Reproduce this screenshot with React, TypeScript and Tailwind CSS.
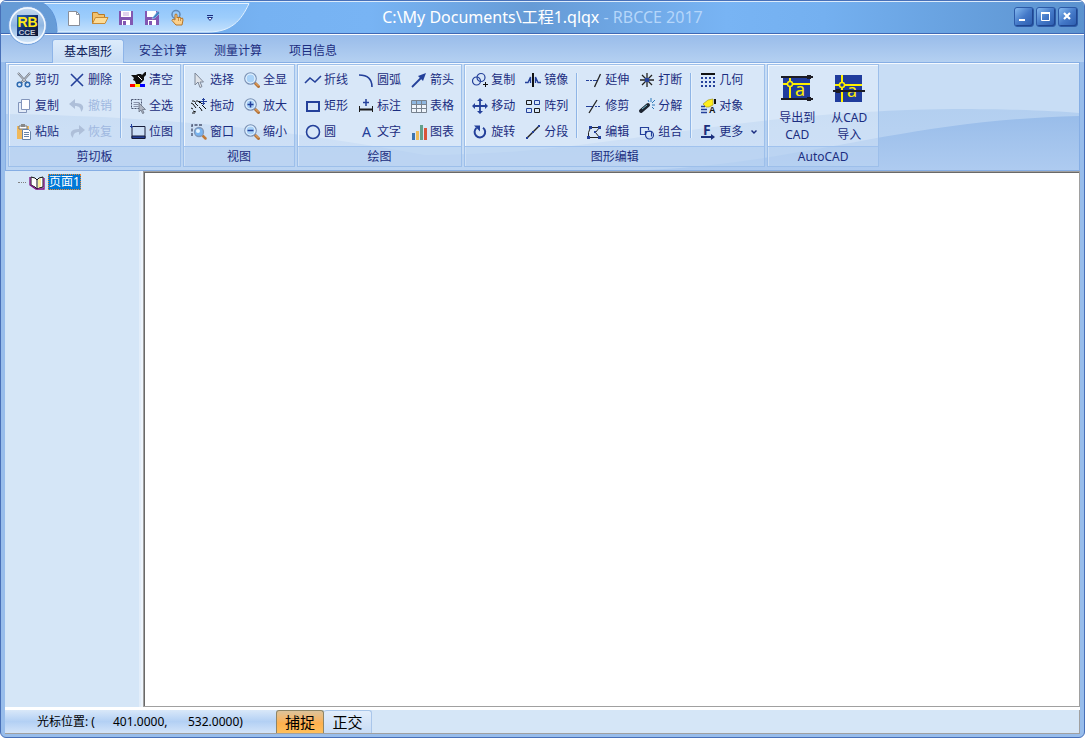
import type { ReactNode } from "react";

interface Tool {
  label: string;
  icon: ReactNode;
  disabled?: boolean;
}

const NAVY = "#24409a";

function Icon({ children }: { children: ReactNode }) {
  return (
    <svg viewBox="0 0 16 16" className="size-4 shrink-0 overflow-visible" fill="none" aria-hidden="true">
      {children}
    </svg>
  );
}

function Magnifier({ children }: { children?: ReactNode }) {
  return (
    <Icon>
      <path d="M11.500 11.500l3 3" stroke="#b5743a" strokeWidth="3" strokeLinecap="round" />
      <path d="M11.500 11l3 3" stroke="#f2b36c" strokeWidth="1" />
      <circle cx="6.500" cy="6.500" r="5.700" fill="#a9d2f8" stroke="#7d93b5" strokeWidth="1.300" />
      <circle cx="6.500" cy="6.500" r="4.500" stroke="#e8f4ff" strokeWidth="1.200" />
      {children}
    </Icon>
  );
}

const clipboardTools: Tool[][] = [
  [
    {
      label: "剪切",
      icon: (
        <Icon>
          <path d="M2 1l9 10M14 1L5 11" stroke="#6c7480" strokeWidth="2" />
          <path d="M2 1l8 9M14 1L6 10" stroke="#e4e9ef" strokeWidth="0.8" />
          <circle cx="3.500" cy="12.500" r="2.300" stroke="#2d6ab0" strokeWidth="1.500" />
          <circle cx="11.500" cy="12.500" r="2.300" stroke="#2d6ab0" strokeWidth="1.500" />
        </Icon>
      ),
    },
    {
      label: "复制",
      icon: (
        <Icon>
          <path d="M2.500 4.500h8v10h-8z" fill="#e4ecf8" stroke="#8295bb" />
          <path d="M5.500 1.500h8v10h-8z" fill="#fff" stroke="#8295bb" />
        </Icon>
      ),
    },
    {
      label: "粘贴",
      icon: (
        <Icon>
          <path d="M1 2h12v13H1z" fill="#f0b95c" />
          <path d="M3 2h8v3H3z" fill="#fff" stroke="#777" />
          <path d="M5 0h4v3H5z" fill="#888" />
          <path d="M6.500 5.500h6l2 2v8h-8z" fill="#fff" stroke="#6684a8" />
          <path d="M8 8.500h5M8 10.500h5M8 12.500h5" stroke="#6684a8" />
        </Icon>
      ),
    },
  ],
  [
    {
      label: "删除",
      icon: (
        <Icon>
          <path d="M2 2l12 12M14 2L2 14" stroke={NAVY} strokeWidth="1.600" />
        </Icon>
      ),
    },
    {
      label: "撤销",
      disabled: true,
      icon: (
        <Icon>
          <path d="M6 1L0 6l6 5V8c4 0 6 2 6 6 4-4 3-9-6-9z" fill="#aebfd9" />
        </Icon>
      ),
    },
    {
      label: "恢复",
      disabled: true,
      icon: (
        <Icon>
          <path d="M10 1l6 5-6 5V8c-4 0-6 2-6 6C0 10 1 5 10 5z" fill="#aebfd9" />
        </Icon>
      ),
    },
  ],
  [
    {
      label: "清空",
      icon: (
        <Icon>
          <path d="M11 4l4-4h1v3l-3 3z" fill="#111" />
          <path d="M1 3h5l2-1h3l3 3v3l-4 4H6L5 9 3 8 4 6z" fill="#111" />
          <path d="M8 4l4 4" stroke="#fff" />
          <path d="M0 12h5v3H0z" fill="#f00" />
          <path d="M5 12h5v3H5z" fill="#fe0" />
          <path d="M10 12h5v3h-5z" fill="#00f" />
        </Icon>
      ),
    },
    {
      label: "全选",
      icon: (
        <Icon>
          <path d="M1.500 1.500h10v9h-10z" stroke="#4a5470" strokeDasharray="2 1" />
          <path d="M3.500 4.500h6M3.500 6.500h5M3.500 8.500h5" stroke="#8a93ab" />
          <path d="M9 5v9l2-2 1.500 3.500 1.500-.5-1.500-3.500h3z" fill="#aeb5c2" stroke="#6b7385" strokeWidth="0.800" />
        </Icon>
      ),
    },
    {
      label: "位图",
      icon: (
        <Icon>
          <path d="M2 2.500h13v12H2z" stroke="#161c3a" />
          <path d="M2 12h13v2.500H2z" fill={NAVY} stroke="#161c3a" />
          <path d="M1.500 0v4M0 2.500h3" stroke={NAVY} />
        </Icon>
      ),
    },
  ],
];

const viewTools: Tool[][] = [
  [
    {
      label: "选择",
      icon: (
        <Icon>
          <path d="M4 1v12l3-3L9 15.500l2-1-2-4.500h3.500z" fill="#dfe3e9" stroke="#7d8798" />
        </Icon>
      ),
    },
    {
      label: "拖动",
      icon: (
        <Icon>
          <path
            d="M1 3h2l2 1.500M5 3h2l2 2M0 5l2 1 3 4M4 5l3 3M8 3l3 3M0 10l2 1M2 13l3 1M1 15h3M11 7l4 4M8 9l2 2 1 2"
            stroke="#111"
          />
          <path d="M12.500 0v7M9 3.500h7M11 1.500h3M11 5.500h3" stroke={NAVY} />
        </Icon>
      ),
    },
    {
      label: "窗口",
      icon: (
        <Icon>
          <path d="M1 12V1h11" stroke="#4b5470" strokeWidth="1.400" strokeDasharray="3 1.500" />
          <path d="M12 12l2.500 2.500" stroke="#c07a38" strokeWidth="2.500" strokeLinecap="round" />
          <circle cx="8" cy="8" r="4.500" fill="#78b4f0" stroke="#8197b8" strokeWidth="1.300" />
          <circle cx="7" cy="7" r="2" fill="#e6f4ff" />
        </Icon>
      ),
    },
  ],
  [
    { label: "全显", icon: <Magnifier /> },
    {
      label: "放大",
      icon: (
        <Magnifier>
          <path d="M6.500 3.500v6M3.500 6.500h6" stroke={NAVY} strokeWidth="1.500" />
        </Magnifier>
      ),
    },
    {
      label: "缩小",
      icon: (
        <Magnifier>
          <path d="M3.500 6.500h6" stroke={NAVY} strokeWidth="1.500" />
        </Magnifier>
      ),
    },
  ],
];

const drawTools: Tool[][] = [
  [
    {
      label: "折线",
      icon: (
        <Icon>
          <path d="M0 11l5-5 5 4 6-6" stroke={NAVY} strokeWidth="1.600" />
        </Icon>
      ),
    },
    {
      label: "矩形",
      icon: (
        <Icon>
          <path d="M2 4h12v9H2z" stroke={NAVY} strokeWidth="2" />
        </Icon>
      ),
    },
    {
      label: "圆",
      icon: (
        <Icon>
          <circle cx="8" cy="8" r="6.500" stroke={NAVY} strokeWidth="1.600" />
        </Icon>
      ),
    },
  ],
  [
    {
      label: "圆弧",
      icon: (
        <Icon>
          <path d="M1 3c8 0 13 4 13 12" stroke={NAVY} strokeWidth="1.600" />
        </Icon>
      ),
    },
    {
      label: "标注",
      icon: (
        <Icon>
          <path d="M8 1v7M5 4.500h6" stroke={NAVY} strokeWidth="1.500" />
          <path d="M1.500 8v6M14.500 8v6" stroke="#1b1b1b" />
          <path d="M2 11.500h12" stroke="#1b1b1b" strokeWidth="2" />
        </Icon>
      ),
    },
    {
      label: "文字",
      icon: (
        <Icon>
          <text x="4" y="13" fontSize="14" fontFamily="Noto Sans, sans-serif" fill={NAVY}>
            A
          </text>
        </Icon>
      ),
    },
  ],
  [
    {
      label: "箭头",
      icon: (
        <Icon>
          <path d="M1 15L11 5" stroke={NAVY} strokeWidth="1.800" />
          <path d="M15 1l-3 8-5-5z" fill={NAVY} />
        </Icon>
      ),
    },
    {
      label: "表格",
      icon: (
        <Icon>
          <path d="M.5 2.500h15v12H.5z" fill="#eef4fb" stroke="#77828f" />
          <path d="M1 3h14v3H1z" fill="#8fb7e0" />
          <path d="M.5 6.500h15M.5 10.500h15M5.500 2.500v12M10.500 2.500v12" stroke="#77828f" />
        </Icon>
      ),
    },
    {
      label: "图表",
      icon: (
        <Icon>
          <path d="M1 9h3v7H1z" fill="#3d74ae" />
          <path d="M5 7h3v9H5z" fill="#efbd5a" />
          <path d="M9 1h3v15H9z" fill="#64a08c" />
          <path d="M13 4h3v12h-3z" fill="#d9553b" />
        </Icon>
      ),
    },
  ],
];

const copyTools: Tool[][] = [
  [
    {
      label: "复制",
      icon: (
        <Icon>
          <circle cx="4.500" cy="9" r="4" stroke={NAVY} strokeWidth="1.200" />
          <circle cx="9" cy="5.500" r="4" stroke={NAVY} strokeWidth="1.200" />
          <path d="M13.500 10v5M11 12.500h5" stroke="#111" />
        </Icon>
      ),
    },
    {
      label: "移动",
      icon: (
        <Icon>
          <path d="M8 1v14M1 8h14" stroke={NAVY} strokeWidth="1.800" />
          <path d="M8 0l3 3H5zM8 16l3-3H5zM0 8l3-3v6zM16 8l-3-3v6z" fill={NAVY} />
        </Icon>
      ),
    },
    {
      label: "旋转",
      icon: (
        <Icon>
          <path d="M4.500 4A5.300 5.300 0 1 0 11 3.800" stroke={NAVY} strokeWidth="2" />
          <path d="M2 1.500h6v6z" fill={NAVY} />
        </Icon>
      ),
    },
  ],
  [
    {
      label: "镜像",
      icon: (
        <Icon>
          <path d="M8 1v14" stroke="#111" strokeWidth="2" />
          <path d="M0 10.500h3L5.500 5v6M16 10.500h-3L10.500 5v6" stroke={NAVY} strokeWidth="1.300" />
        </Icon>
      ),
    },
    {
      label: "阵列",
      icon: (
        <Icon>
          <path d="M1.500 2.500h5v4h-5zM9.500 10.500h5v4h-5z" stroke="#1b1b1b" />
          <path d="M9.500 2.500h5v4h-5zM1.500 10.500h5v4h-5z" stroke={NAVY} />
        </Icon>
      ),
    },
    {
      label: "分段",
      icon: (
        <Icon>
          <path d="M2 14L14 2" stroke="#222" strokeWidth="1.500" />
          <path d="M1 13h2v2H1zM7 7h2v2H7zM13 1h2v2h-2z" fill={NAVY} />
        </Icon>
      ),
    },
  ],
];

const trimTools: Tool[][] = [
  [
    {
      label: "延伸",
      icon: (
        <Icon>
          <path d="M0 8.500h3M4 8.500h2M7 8.500h4" stroke={NAVY} />
          <path d="M8.500 15l6-13" stroke="#222" strokeWidth="1.300" />
        </Icon>
      ),
    },
    {
      label: "修剪",
      icon: (
        <Icon>
          <path d="M0 8.500h7M9 8.500h2M12 8.500h2" stroke={NAVY} />
          <path d="M3 15L11 2" stroke="#222" strokeWidth="1.300" />
        </Icon>
      ),
    },
    {
      label: "编辑",
      icon: (
        <Icon>
          <path d="M2.500 13.500v-5l2-5h9l-4 5 4 5z" stroke="#222" />
          <path d="M3 2h3v3H3zM12 2h3v3h-3zM1 12h3v3H1zM12 12h3v3h-3zM8 7h2v2H8z" fill={NAVY} />
        </Icon>
      ),
    },
  ],
  [
    {
      label: "打断",
      icon: (
        <Icon>
          <path d="M8 1v14M1 8h14M3 3l10 10M13 3L3 13" stroke="#222" strokeWidth="1.300" />
          <path d="M6 6h4v4H6z" fill={NAVY} />
        </Icon>
      ),
    },
    {
      label: "分解",
      icon: (
        <Icon>
          <path d="M2 13l7-6" stroke="#1d2430" strokeWidth="4" strokeLinecap="round" />
          <path d="M3 11l5-4" stroke="#6dbbd0" />
          <path d="M10 4l-1-2M12 4V0M13 5l3-3M13 7h3M13 9l2 2" stroke="#2c78b8" />
        </Icon>
      ),
    },
    {
      label: "组合",
      icon: (
        <Icon>
          <path d="M6 10.500H1.500v-7h8V6" stroke={NAVY} strokeWidth="1.200" />
          <path d="M6.500 10V7.500h6v5" stroke={NAVY} strokeWidth="1.200" />
          <circle cx="10.500" cy="11" r="4" stroke={NAVY} strokeWidth="1.200" />
        </Icon>
      ),
    },
  ],
];

const moreTools: Tool[][] = [
  [
    {
      label: "几何",
      icon: (
        <Icon>
          <path d="M1 2h14" stroke="#111" strokeWidth="2" />
          <path d="M2 5v10M6 5v10M10 5v10M14 5v10" stroke={NAVY} strokeWidth="2" strokeDasharray="2 2" />
        </Icon>
      ),
    },
    {
      label: "对象",
      icon: (
        <Icon>
          <path d="M3 6l5-4 5-1v6l-4 2H6z" fill="#ffee1c" stroke="#a89b20" strokeWidth="0.700" />
          <path d="M14 1h2v5h-2z" fill="#111" />
          <path d="M1 8.500h4M1 11.500h6M1 14.500h6" stroke={NAVY} strokeWidth="1.500" />
          <text x="9" y="15" fontSize="9" fontWeight="700" fontFamily="Liberation Sans, sans-serif" fill="#111">
            A
          </text>
        </Icon>
      ),
    },
    {
      label: "更多",
      icon: (
        <Icon>
          <text x="3" y="11" fontSize="14" fontWeight="700" fontFamily="Noto Sans, sans-serif" fill="#1a2f7c">
            F
          </text>
          <path d="M1 13h11" stroke="#1a2f7c" strokeWidth="2" />
          <path d="M11 10l4 3-4 3z" fill="#1a2f7c" />
        </Icon>
      ),
    },
  ],
];

function ToolButton({ tool }: { tool: Tool }) {
  return (
    <button
      type="button"
      disabled={tool.disabled}
      className="flex h-[26px] items-center gap-[3px] text-xs text-[#1b2d80] disabled:text-[#9fb8e0]"
    >
      {tool.icon}
      {tool.label}
    </button>
  );
}

function ToolColumns({ columns }: { columns: Tool[][] }) {
  return (
    <div className="flex gap-[10px] pt-0.5">
      {columns.map((column) => (
        <div key={column[0].label}>
          {column.map((tool) => (
            <ToolButton key={tool.label} tool={tool} />
          ))}
        </div>
      ))}
    </div>
  );
}

function Divider() {
  return <div className="my-2 mr-[9px] ml-2 w-px bg-[#8fb5e6] shadow-[1px_0_0_#e6f1fc]" />;
}

function Group({ title, children }: { title: string; children: ReactNode }) {
  return (
    <section className="flex flex-col border border-[#9dbfea] bg-white/30 shadow-[inset_1px_1px_0_rgba(255,255,255,0.7)]">
      <div className="flex flex-1 px-[7px]">{children}</div>
      <h2 className="border-t border-[#a0c2ee] bg-[#a4c5ee]/45 text-center text-xs leading-[19px] text-[#1b2d80]">{title}</h2>
    </section>
  );
}

function ExportIcon() {
  return (
    <svg viewBox="0 0 32 28" className="h-7 w-8 overflow-visible" aria-hidden="true">
      <path d="M2 2h27v22H2z" fill="#203c9c" />
      <path d="M0 1h32v2H0zM0 23h32v2H0z" fill="#1c1c24" />
      <path d="M26 0h4v4h-4zM26 22h4v4h-4z" fill="#1c1c24" />
      <path d="M2 9h27M9 3v20" stroke="#fff000" strokeWidth="2" />
      <circle cx="9" cy="9" r="2.500" fill="#203c9c" stroke="#fff000" strokeWidth="1.500" />
      <text x="14" y="21" fontSize="18" fontFamily="Noto Sans, sans-serif" fill="#fff000">
        a
      </text>
    </svg>
  );
}

function ImportIcon() {
  return (
    <svg viewBox="0 0 32 28" className="h-7 w-8 overflow-visible" aria-hidden="true">
      <path d="M2 0h27v27H2z" fill="#203c9c" />
      <path d="M2 10h27M9 0v27" stroke="#fff000" strokeWidth="2" />
      <circle cx="9" cy="10" r="2.500" fill="#203c9c" stroke="#fff000" strokeWidth="1.500" />
      <text x="14" y="22" fontSize="18" fontFamily="Noto Sans, sans-serif" fill="#fff000">
        a
      </text>
      <path d="M0 15h32v2H0zM3 14h4v4H3z" fill="#1c1c24" />
    </svg>
  );
}

function QuickAccess() {
  return (
    <div className="relative h-[30px] w-[250px]">
      <svg viewBox="0 0 250 30" className="absolute inset-0 h-full w-full" fill="none" aria-hidden="true">
        <defs>
          <linearGradient id="qat" x1="0" y1="0" x2="0" y2="1">
            <stop offset="0" stopColor="#8ec4fb" />
            <stop offset="0.5" stopColor="#9dcdfc" />
            <stop offset="1" stopColor="#c3e0fc" />
          </linearGradient>
        </defs>
        <path d="M42 0H248C240 18 230 29 207 29H56C56 16 52 6 42 0z" fill="url(#qat)" />
        <path d="M42 0.500H248C240 18 230 29 207 29H56" stroke="#e4f2ff" />
        <path d="M56 29C56 16 52 6 42 0" stroke="#5d93d6" />
      </svg>
      <div className="relative flex h-full items-center gap-[10px] pl-[65px]">
        <button type="button" aria-label="新建">
          <Icon>
            <path d="M2.500 1.500h8l3 3v11h-11z" fill="#fff" stroke="#8a8f99" />
            <path d="M10.500 1.500v3h3" stroke="#8a8f99" />
          </Icon>
        </button>
        <button type="button" aria-label="打开">
          <Icon>
            <path d="M.5 13.500v-11h5l1 2h6v9z" fill="#f3c26d" stroke="#b77a27" />
            <path d="M.5 13.500l3-6h12.500l-3 6z" fill="#fddc97" stroke="#c98b35" />
          </Icon>
        </button>
        <button type="button" aria-label="保存">
          <Icon>
            <path d="M1 1h14v14H1z" fill="#8257b2" />
            <path d="M3 1h10v6H3z" fill="#fff" />
            <path d="M5 3h6M5 5h6" stroke="#c3a9dd" />
            <path d="M4 10h8v5H4z" fill="#fff" />
            <path d="M5 11h3v4H5z" fill="#8257b2" />
          </Icon>
        </button>
        <button type="button" aria-label="另存为">
          <Icon>
            <path d="M1 1h14v14H1z" fill="#8257b2" />
            <path d="M3 1h9v6H3z" fill="#fff" />
            <path d="M4 10h8v5H4z" fill="#fff" />
            <path d="M5 11h3v4H5z" fill="#8257b2" />
            <path d="M9 7l5-6 2 2-5 5-3 1z" fill="#3f82c4" stroke="#bfe0f8" strokeWidth="0.500" />
          </Icon>
        </button>
        <button type="button" aria-label="触摸模式">
          <Icon>
            <circle cx="6" cy="4.500" r="4" stroke="#5f87b4" strokeWidth="1.500" />
            <path
              d="M5 4.500q1-1 2 0V8l1-1 1 1 1-1 1 1.500 1.500-.5.5 2-1 5H6L2 10.500 3 9l2 1z"
              fill="#fbd08c"
              stroke="#b5762a"
            />
            <path d="M8.500 8v3M10.500 8v3" stroke="#b5762a" strokeWidth="0.700" />
          </Icon>
        </button>
        <button type="button" aria-label="自定义快速访问工具栏" className="ml-[10px]">
          <svg viewBox="0 0 8 8" className="size-2" fill="none" aria-hidden="true">
            <path d="M1 1.500h6" stroke="#1b2d80" />
            <path d="M1.500 3.500h5L4 6.500z" fill="#fff" stroke="#1b2d80" />
          </svg>
        </button>
      </div>
    </div>
  );
}

function WindowButton({ label, children }: { label: string; children: ReactNode }) {
  return (
    <button
      type="button"
      aria-label={label}
      className="size-5 rounded-[3px] border border-[#2d5ba8] bg-linear-to-br from-[#86baf0] via-[#4479c8] to-[#2c5cae] shadow-[inset_-1px_-1px_0_#1f4690]"
    >
      <svg viewBox="0 0 18 18" className="size-[18px]" fill="none" stroke="#fff" aria-hidden="true">
        {children}
      </svg>
    </button>
  );
}

function TitleBar() {
  return (
    <header className="relative flex h-[33px] items-start border-b border-[#3f68b4] bg-[linear-gradient(90deg,#669bd6_0%,#669bd6_4%,#76b2f2_24%,#78b4f4_34%,#669bd6_49%,#78b4f4_67%,#74b0f0_76%,#5c93cf_100%)] pt-0.5 shadow-[inset_0_1px_0_#dcebfb]">
      <QuickAccess />
      <h1 className="pointer-events-none absolute inset-x-0 top-0 text-center text-base leading-8 text-white">
        C:\My Documents\工程1.qlqx <span className="text-[#b5d6fa]">- RBCCE 2017</span>
      </h1>
      <div className="ml-auto flex gap-0.5 pt-1 pr-1.5">
        <WindowButton label="最小化">
          <path d="M4 12h6" strokeWidth="2" />
        </WindowButton>
        <WindowButton label="最大化">
          <path d="M4.500 5.500h8v7h-8z" />
          <path d="M4 5h9" strokeWidth="2" />
        </WindowButton>
        <WindowButton label="关闭">
          <path d="M5 5l6 6M11 5l-6 6" strokeWidth="2.200" />
        </WindowButton>
      </div>
    </header>
  );
}

function AppOrb() {
  return (
    <button type="button" aria-label="RBCCE" className="absolute top-[3px] left-1 z-10 size-11">
      <svg viewBox="0 0 44 44" className="size-11" aria-hidden="true">
        <defs>
          <linearGradient id="orb" x1="0" y1="0" x2="0" y2="1">
            <stop offset="0" stopColor="#c8dbf0" />
            <stop offset="0.500" stopColor="#8fb6e2" />
            <stop offset="1" stopColor="#dcecfb" />
          </linearGradient>
          <linearGradient id="logo" x1="0" y1="0" x2="1" y2="1">
            <stop offset="0" stopColor="#2868c0" />
            <stop offset="0.500" stopColor="#122c68" />
            <stop offset="1" stopColor="#10162e" />
          </linearGradient>
        </defs>
        <circle cx="22.500" cy="21.500" r="19" fill="url(#orb)" stroke="#6f9fdc" />
        <circle cx="22.500" cy="21.500" r="17.500" fill="none" stroke="#f2f8ff" strokeWidth="1.500" />
        <path d="M12 11h21v21H12z" fill="url(#logo)" />
        <text x="12.500" y="23" fontSize="14" fontWeight="700" fontFamily="Liberation Sans, sans-serif" fill="#ffe81a">
          RB
        </text>
        <text x="13.500" y="31" fontSize="8" fontWeight="700" fontFamily="Liberation Sans, sans-serif" fill="#c3cbd8">
          CCE
        </text>
      </svg>
    </button>
  );
}

const tabs = ["基本图形", "安全计算", "测量计算", "项目信息"];

function Ribbon() {
  return (
    <div className="relative flex h-[109px] overflow-hidden border border-[#86aee4] bg-[#c8ddf5] px-0.5 pt-px pb-[3px] shadow-[inset_0_1px_0_#f4f9ff]">
      <svg
        viewBox="0 0 1075 107"
        preserveAspectRatio="none"
        className="absolute inset-0 h-full w-full"
        aria-hidden="true"
      >
        <defs>
          <linearGradient id="waveFar" x1="0" y1="0" x2="0" y2="1">
            <stop offset="0" stopColor="#b3cff0" />
            <stop offset="1" stopColor="#bcd5f3" />
          </linearGradient>
          <linearGradient id="waveNear" x1="0" y1="0" x2="0" y2="1">
            <stop offset="0" stopColor="#99bdea" />
            <stop offset="1" stopColor="#aecbf0" />
          </linearGradient>
        </defs>
        <path d="M0 51C170 54 290 68 420 92C600 92 720 48 950 46C1010 46 1050 48 1075 50V107H0z" fill="url(#waveFar)" />
        <path d="M640 107C800 100 900 57 1075 53V107z" fill="url(#waveNear)" />
      </svg>
      <div className="relative flex gap-0.5">
        <Group title="剪切板">
          <ToolColumns columns={clipboardTools.slice(0, 2)} />
          <Divider />
          <ToolColumns columns={clipboardTools.slice(2)} />
        </Group>
        <Group title="视图">
          <ToolColumns columns={viewTools} />
        </Group>
        <Group title="绘图">
          <ToolColumns columns={drawTools} />
        </Group>
        <Group title="图形编辑">
          <ToolColumns columns={copyTools} />
          <Divider />
          <ToolColumns columns={trimTools} />
          <Divider />
          <div className="flex items-start gap-2">
            <ToolColumns columns={moreTools} />
            <button type="button" aria-label="更多图形编辑" className="mt-[54px] flex h-[26px] items-center">
              <svg viewBox="0 0 6 6" className="size-1.5" fill="none" aria-hidden="true">
                <path d="M.5 1.500L3 4l2.500-2.500" stroke="#1b2d80" strokeWidth="1.500" />
              </svg>
            </button>
          </div>
        </Group>
        <Group title="AutoCAD">
          <div className="-mx-1 flex items-start pt-[10px] text-xs leading-[17px] text-[#1b2d80]">
            <button type="button" className="flex w-[52px] flex-col items-center gap-1.5">
              <ExportIcon />
              <span>
                导出到
                <br />
                CAD
              </span>
            </button>
            <button type="button" className="flex w-[52px] flex-col items-center gap-1.5">
              <ImportIcon />
              <span>
                从CAD
                <br />
                导入
              </span>
            </button>
          </div>
        </Group>
      </div>
    </div>
  );
}

function PageTree() {
  return (
    <aside className="mr-0.5 w-[136px] shrink-0 border-r-2 border-[#e3eefa] bg-[#d5e6f7] pt-0.5 pl-[13px]">
      <button type="button" className="flex h-[18px] items-center gap-[3px]">
        <span className="w-2 border-t border-dotted border-[#808080]" />
        <Icon>
          <path d="M2 3l4 1 2 2 2-2 4-1v10l-4 1-2 1-2-2-4-2z" fill="#fff" stroke="#111" />
          <path d="M1 3v8l6 4h8V4" stroke="#7c1080" strokeWidth="1.300" />
          <path d="M8 6v9" stroke="#111" />
          <path d="M9 6l3-2v8l-3 2z" fill="#f7ee9c" />
        </Icon>
        <span className="border border-dotted border-[#f08b2c] bg-[#0078d7] text-xs leading-[14px] text-white">页面1</span>
      </button>
    </aside>
  );
}

function StatusBar() {
  return (
    <footer className="flex h-6 border-r border-b border-[#a0a0a0] bg-[#d5e6f7] text-xs text-black">
      <div className="flex w-[271px] items-center bg-linear-to-b from-[#d9e8f9] via-[#b3d0f4] to-[#d3e4f9] pl-8">
        <span className="w-[76px]">光标位置: (</span>
        <span className="w-[75px]">401.0000,</span>
        <span>532.0000)</span>
      </div>
      <button
        type="button"
        aria-pressed="true"
        className="w-12 rounded-t-[3px] border border-b-0 border-[#8e8566] bg-linear-to-b from-[#dcc39a] via-[#fdb04e] via-55% to-[#ffc05c] text-[15px] leading-5"
      >
        捕捉
      </button>
      <button
        type="button"
        aria-pressed="false"
        className="w-12 rounded-t-[3px] border-t border-r border-[#a9c6ea] bg-linear-to-b from-[#e2edfb] to-[#c8dcf5] text-[15px] leading-5"
      >
        正交
      </button>
    </footer>
  );
}

export default function App() {
  return (
    <div className="relative flex h-screen flex-col overflow-hidden rounded-md border border-[#4870b8] bg-[#98bdeb] font-['Noto_Sans','Noto_Sans_CJK_SC',sans-serif]">
      <TitleBar />
      <AppOrb />
      <nav className="flex h-7 gap-[3px] border-t border-white bg-linear-to-b from-[#99bcea] to-[#b4d0f1] pt-1 pl-[51px]">
        {tabs.map((tab, index) => (
          <button
            key={tab}
            type="button"
            className={
              index === 0
                ? "relative z-10 h-6 w-[72px] rounded-t-[3px] border border-b-0 border-[#8db4e8] bg-linear-to-b from-[#dcebfb] to-[#c8ddf5] text-xs text-[#0d1c58]"
                : "h-6 w-[72px] text-xs text-[#1b2d80]"
            }
          >
            {tab}
          </button>
        ))}
      </nav>
      <div className="flex min-h-0 flex-1 flex-col px-1 pb-[3px]">
        <Ribbon />
        <main className="flex min-h-0 flex-1 bg-[#edf4fc]">
          <PageTree />
          <div className="flex-1 border border-[#a0a0a0] bg-white shadow-[inset_1px_1px_0_#696969]" />
        </main>
        <div className="h-[3px] bg-white" />
        <StatusBar />
      </div>
    </div>
  );
}
